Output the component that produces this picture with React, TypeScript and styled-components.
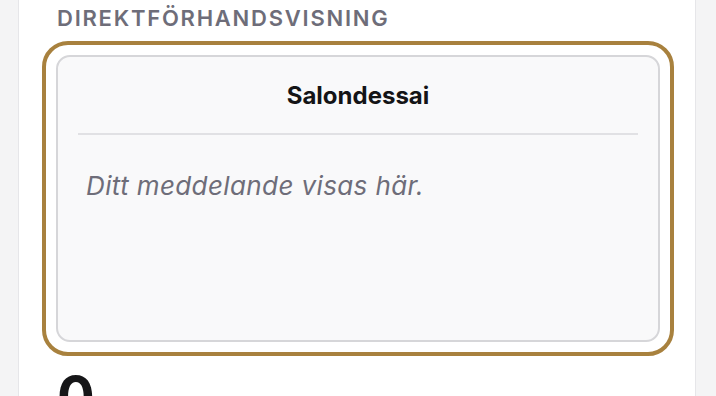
import React, { FC } from "react";
import styled, { createGlobalStyle } from "styled-components";

const GlobalStyle = createGlobalStyle`
  html, body {
    margin: 0;
    padding: 0;
    background: #f4f4f5;
    font-family: Inter, "Noto Sans", sans-serif;
  }
`;

const Page = styled.div`
  display: flex;
  height: 396px;
  overflow: hidden;
  padding-left: 18px;
`;

const Panel = styled.section`
  width: 603px;
  padding: 0 35px 0 38px;
  background: #ffffff;
  border-left: 1px solid #e6e6e9;
  border-right: 1px solid #e6e6e9;
  display: flex;
  flex-direction: column;
`;

const SectionLabel = styled.h3`
  margin: 3px 0 0;
  font-size: 22px;
  line-height: 30px;
  font-weight: 600;
  letter-spacing: 0.08em;
  text-transform: uppercase;
  color: #6e6d79;
`;

const Frame = styled.div`
  margin: 8px -14px 0 -15px;
  padding: 10px;
  border: 4px solid #a8813e;
  border-radius: 26px;
`;

const Preview = styled.div`
  height: 283px;
  border: 2px solid #d6d6d9;
  border-radius: 14px;
  background: #f9f9fa;
  display: flex;
  flex-direction: column;
`;

const PreviewHeader = styled.div`
  margin: 0 20px;
  height: 76px;
  border-bottom: 2px solid #e1e1e4;
  display: flex;
  align-items: center;
  justify-content: center;
`;

const SalonName = styled.h4`
  margin: 0;
  font-size: 24px;
  font-weight: 700;
  color: #141416;
`;

const MessageBody = styled.p`
  margin: 0;
  padding: 35px 28px 0;
  font-size: 26px;
  line-height: 32px;
  letter-spacing: 0.015em;
  font-style: italic;
  color: #6e6d79;
`;

const Counter = styled.div`
  margin-top: 13px;
  font-size: 56px;
  line-height: 56px;
  font-weight: 700;
  color: #161618;
`;

type PreviewProps = {
  salon: string;
  message?: string;
};

const LivePreview: FC<PreviewProps> = (props: PreviewProps) => {
  return (
    <Frame>
      <Preview>
        <PreviewHeader>
          <SalonName>{props.salon}</SalonName>
        </PreviewHeader>
        <MessageBody>{props.message || "Ditt meddelande visas här."}</MessageBody>
      </Preview>
    </Frame>
  );
};

const App: FC = () => {
  return (
    <>
      <GlobalStyle />
      <Page>
        <Panel>
          <SectionLabel>Direktförhandsvisning</SectionLabel>
          <LivePreview salon="Salondessai" />
          <Counter>0</Counter>
        </Panel>
      </Page>
    </>
  );
};

export default App;
